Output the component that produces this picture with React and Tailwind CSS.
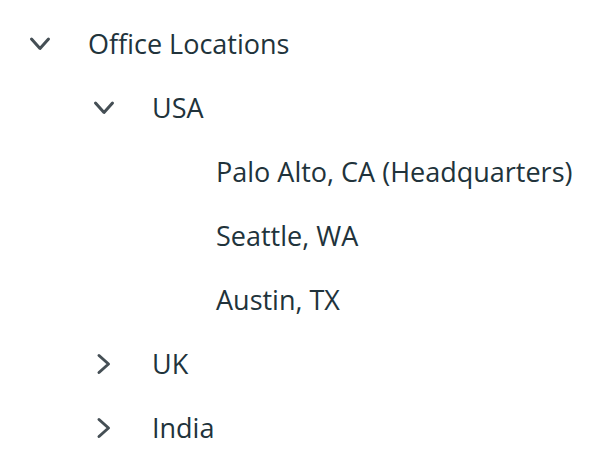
import { useState } from 'react';

const tree = {
    label: 'Office Locations',
    expanded: true,
    children: [
        {
            label: 'USA',
            expanded: true,
            children: [
                { label: 'Palo Alto, CA (Headquarters)' },
                { label: 'Seattle, WA' },
                { label: 'Austin, TX' },
            ],
        },
        { label: 'UK', expanded: false, children: [{ label: 'London' }] },
        { label: 'India', expanded: false, children: [{ label: 'Bangalore' }] },
    ],
};

const Chevron = ({ open }) => (
    <svg
        className={`w-[24px] h-[24px] text-[#454f55] ${open ? 'rotate-90' : ''}`}
        viewBox="0 0 24 24"
        fill="none"
        stroke="currentColor"
        strokeWidth="3"
        strokeLinecap="round"
        strokeLinejoin="round"
    >
        <path d="M7 3.5l9.5 8.5-9.5 8.5" />
    </svg>
);

const TreeNode = ({ node, depth }) => {
    const [open, setOpen] = useState(!!node.expanded);
    const hasChildren = !!node.children;

    return (
        <div>
            <div className="flex items-center h-[64px]" style={{ paddingLeft: depth * 64 }}>
                <div className="w-[88px] flex items-center shrink-0">
                    {hasChildren && (
                        <button onClick={() => setOpen((o) => !o)} className="ml-[28px] flex items-center justify-center">
                            <Chevron open={open} />
                        </button>
                    )}
                </div>
                <span className="text-[27px] text-[#21333b] leading-none -mt-[2px]">{node.label}</span>
            </div>
            {hasChildren && open && node.children.map((child) => (
                <TreeNode key={child.label} node={child} depth={depth + 1} />
            ))}
        </div>
    );
};

export default function App() {
    return (
        <div className="min-h-screen bg-white pt-[12px]" style={{ fontFamily: '"Open Sans", "Liberation Sans", sans-serif' }}>
            <TreeNode node={tree} depth={0} />
        </div>
    );
}
